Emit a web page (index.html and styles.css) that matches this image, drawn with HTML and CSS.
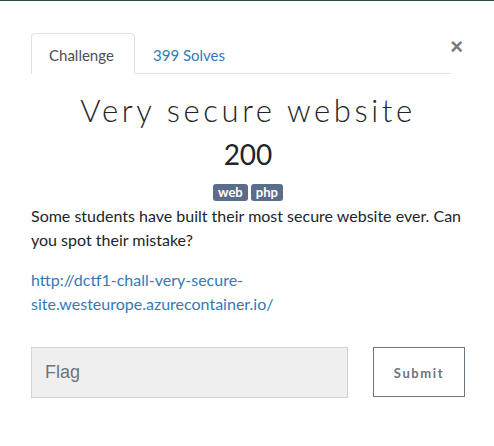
FILE: index.html
```html
<!DOCTYPE html>
<html>
<head>
<meta charset="utf-8">
<link rel="stylesheet" href="styles.css">
</head>
<body>
<div class="topline"></div>
<div class="modal">
  <div class="tabs-row">
    <ul class="tabs">
      <li class="tab active">Challenge</li>
      <li class="tab link">399 Solves</li>
    </ul>
    <span class="close">&times;</span>
  </div>
  <h2 class="title">Very secure website</h2>
  <h3 class="value">200</h3>
  <div class="tags">
    <span class="badge">web</span>
    <span class="badge">php</span>
  </div>
  <p class="desc">Some students have built their most secure website ever. Can you spot their mistake?</p>
  <p class="url"><a href="#">http://dctf1-chall-very-secure-site.westeurope.azurecontainer.io/</a></p>
  <form class="flag-form">
    <input class="flag-input" type="text" placeholder="Flag">
    <button class="submit" type="button">Submit</button>
  </form>
</div>
</body>
</html>
```

FILE: styles.css
```css
html, body {
  margin: 0;
  padding: 0;
  background: #fff;
}
body {
  font-family: "Lato", "Noto Sans", sans-serif;
  color: #212529;
  width: 494px;
  height: 446px;
  overflow: hidden;
}
.topline {
  height: 1px;
  background: #2b4a3f;
}
.modal {
  padding: 32px 29px 0 31px;
}
.tabs-row {
  position: relative;
  margin-right: 14px;
}
.tabs {
  list-style: none;
  margin: 0;
  padding: 0;
  display: flex;
  border-bottom: 1px solid #dee2e6;
  height: 40px;
}
.tab {
  font-size: 15px;
  line-height: 20px;
  padding: 11px 16px 9px 17px;
  border: 1px solid transparent;
  border-top-left-radius: 4px;
  border-top-right-radius: 4px;
  margin-bottom: -1px;
}
.tab.active {
  color: #495057;
  border-color: #dee2e6 #dee2e6 #fff;
  background: #fff;
  width: 69px;
}
.tab.link {
  color: #337ab7;
}
.close {
  position: absolute;
  right: -12px;
  top: 2px;
  font-size: 22px;
  font-weight: 700;
  color: #7a7a7a;
  font-family: "Liberation Sans", Arial, sans-serif;
  line-height: 24px;
}
.title {
  font-family: "Lato", sans-serif;
  font-weight: 300;
  font-size: 31px;
  letter-spacing: 3.6px;
  text-align: center;
  margin: 16px 0 0 0;
  line-height: 40px;
  color: #212529;
}
.value {
  font-weight: 400;
  font-size: 28px;
  text-align: center;
  margin: 7px 0 0 0;
  line-height: 34px;
  color: #212529;
}
.tags {
  display: flex;
  justify-content: center;
  gap: 3px;
  margin-top: 13px;
}
.badge {
  background: #5a6d8a;
  color: #fff;
  font-weight: 700;
  font-size: 13px;
  line-height: 17px;
  padding: 0 5px;
  border-radius: 3px;
}
.desc {
  font-size: 16px;
  line-height: 24px;
  margin: 3px 0 0 0;
  width: 440px;
}
.url {
  font-size: 16px;
  line-height: 24px;
  margin: 16px 0 0 0;
  width: 300px;
}
.url a {
  color: #337ab7;
  text-decoration: none;
}
.flag-form {
  display: flex;
  gap: 25px;
  margin-top: 31px;
}
.flag-input {
  box-sizing: border-box;
  width: 317px;
  height: 51px;
  background: #efefef;
  border: 1px solid #ced4da;
  padding: 0 13px;
  font-family: "Liberation Sans", Arial, sans-serif;
  font-size: 18px;
  color: #495057;
  outline: none;
}
.flag-input::placeholder {
  color: #6c757d;
}
.submit {
  box-sizing: border-box;
  width: 92px;
  height: 50px;
  background: #fff;
  border: 1px solid #6c757d;
  color: #6c757d;
  font-family: "Lato", sans-serif;
  font-weight: 700;
  font-size: 13px;
  letter-spacing: 1.6px;
  padding: 2px 0 0 0;
  cursor: pointer;
}
```
